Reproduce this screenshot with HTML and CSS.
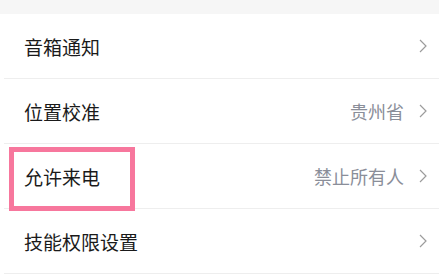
FILE: index.html
```html
<!DOCTYPE html>
<html lang="zh">
<head>
<meta charset="utf-8">
<link rel="stylesheet" href="styles.css">
</head>
<body>
<div class="topband"></div>
<div class="list">
  <div class="row">
    <span class="label">音箱通知</span>
    <span class="right"><svg class="chev" width="8" height="14" viewBox="0 0 8 14"><polyline points="1,1 7,7 1,13"/></svg></span>
  </div>
  <div class="row">
    <span class="label">位置校准</span>
    <span class="right"><span class="value">贵州省</span><svg class="chev" width="8" height="14" viewBox="0 0 8 14"><polyline points="1,1 7,7 1,13"/></svg></span>
  </div>
  <div class="row highlighted">
    <span class="label">允许来电</span>
    <span class="right"><span class="value">禁止所有人</span><svg class="chev" width="8" height="14" viewBox="0 0 8 14"><polyline points="1,1 7,7 1,13"/></svg></span>
    <div class="mark"></div>
  </div>
  <div class="row">
    <span class="label">技能权限设置</span>
    <span class="right"><svg class="chev" width="8" height="14" viewBox="0 0 8 14"><polyline points="1,1 7,7 1,13"/></svg></span>
  </div>
</div>
</body>
</html>
```
FILE: styles.css
```css
html, body {
  margin: 0;
  padding: 0;
  background: #ffffff;
  font-family: "Noto Sans CJK SC", "Noto Sans", sans-serif;
}
.topband {
  height: 14px;
  background: #f6f6f6;
}
.list {
  padding-left: 4px;
}
.row {
  position: relative;
  display: flex;
  align-items: center;
  justify-content: space-between;
  height: 64px;
  padding: 0 12px 0 20px;
  border-bottom: 1px solid #eeeeee;
}
.label {
  font-size: 19px;
  color: #1a1a1a;
  line-height: 1;
}
.right {
  display: flex;
  align-items: center;
  gap: 15px;
}
.value {
  font-size: 18px;
  color: #8a8e99;
  line-height: 1;
}
.chev {
  display: block;
}
.chev polyline {
  fill: none;
  stroke: #9c9c9c;
  stroke-width: 1.2;
}
.mark {
  position: absolute;
  left: 5px;
  top: 3px;
  width: 116px;
  height: 54px;
  border: 5px solid #f7779d;
}
```
